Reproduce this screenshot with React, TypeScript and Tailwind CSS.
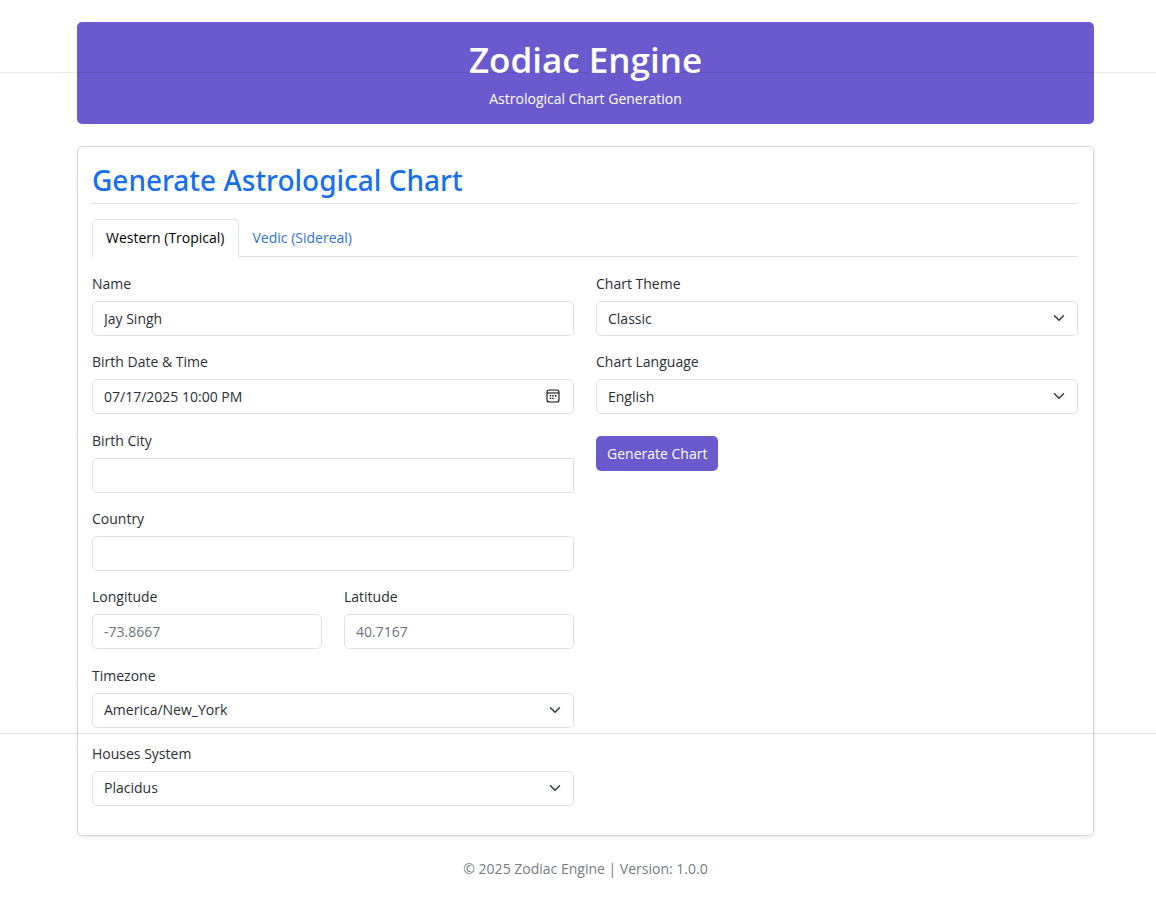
import { useState } from 'react';
import type { ReactNode } from 'react';

const control =
  'block h-[35px] w-full border border-[#dee2e6] bg-white px-[11px] text-[#2b2f33] placeholder:text-[#6c757d] focus:outline-2 focus:outline-[#6a5acd]';

function Field({ id, label, children }: { id: string; label: string; children: ReactNode }) {
  return (
    <div>
      <label htmlFor={id} className="mb-[6px] block leading-[23px]">
        {label}
      </label>
      {children}
    </div>
  );
}

function TextField({
  id,
  label,
  value,
  placeholder,
  squareEnd = false,
}: {
  id: string;
  label: string;
  value?: string;
  placeholder?: string;
  squareEnd?: boolean;
}) {
  return (
    <Field id={id} label={label}>
      <input
        id={id}
        name={id}
        type="text"
        defaultValue={value}
        placeholder={placeholder}
        className={`${control} ${squareEnd ? 'rounded-l-[5px]' : 'rounded-[5px]'}`}
      />
    </Field>
  );
}

function SelectField({ id, label, options }: { id: string; label: string; options: string[] }) {
  return (
    <Field id={id} label={label}>
      <div className="relative">
        <select id={id} name={id} className={`${control} appearance-none rounded-[5px]`}>
          {options.map((option) => (
            <option key={option}>{option}</option>
          ))}
        </select>
        <svg
          viewBox="0 0 16 16"
          aria-hidden="true"
          className="pointer-events-none absolute top-[11px] right-[13px] size-3"
        >
          <path
            d="m2 5 6 6 6-6"
            fill="none"
            stroke="#343a40"
            strokeWidth="2"
            strokeLinecap="round"
            strokeLinejoin="round"
          />
        </svg>
      </div>
    </Field>
  );
}

function DateTimeField() {
  return (
    <Field id="birth-date" label="Birth Date &amp; Time">
      <div className="relative">
        <input
          id="birth-date"
          name="birth-date"
          type="text"
          defaultValue="07/17/2025 10:00 PM"
          className={`${control} rounded-[5px]`}
        />
        <svg
          viewBox="0 0 14 14"
          aria-hidden="true"
          className="pointer-events-none absolute top-[10px] right-[14px] size-[14px]"
        >
          <rect x="1" y="1" width="12" height="12" rx="2" fill="none" stroke="#111" strokeWidth="1.1" />
          <path d="M1 4h12" stroke="#111" strokeWidth="1.1" />
          <g fill="#111">
            <rect x="3.8" y="6" width="1.4" height="1.4" />
            <rect x="6.2" y="6" width="1.4" height="1.4" />
            <rect x="8.8" y="6" width="1.6" height="1.6" />
            <rect x="3.8" y="8.6" width="1.4" height="1.4" />
            <rect x="6.2" y="8.6" width="1.4" height="1.4" />
          </g>
        </svg>
      </div>
    </Field>
  );
}

export default function App() {
  const [tab, setTab] = useState('western');
  const tabs = [
    { id: 'western', label: 'Western (Tropical)' },
    { id: 'vedic', label: 'Vedic (Sidereal)' },
  ];

  return (
    <div className="relative min-h-screen bg-white pt-[22px] pr-[62px] pb-9 pl-[77px] font-['Open_Sans',sans-serif] text-[14px] leading-[22px] text-[#2b2f33]">
      <div className="pointer-events-none absolute inset-x-0 top-[72px] h-px bg-black/8" />
      <div className="pointer-events-none absolute inset-x-0 top-[733px] z-10 h-px bg-black/10" />

      <header className="rounded-[5px] bg-[#6a5acd] pt-[15px] pb-[14px] text-center text-white">
        <h1 className="mb-[6px] text-[35px] leading-[45px] font-semibold">Zodiac Engine</h1>
        <p>Astrological Chart Generation</p>
      </header>

      <main className="mt-[22px] rounded-[5px] border border-[#d3d4d5] pt-[15px] pr-[15px] pb-[29px] pl-[14px] shadow-[0_2px_4px_rgba(0,0,0,0.08)]">
        <h2 className="mb-[15px] border-b border-[#dee2e6] pb-[5px] font-['Noto_Sans','Open_Sans',sans-serif] text-[28px] leading-9 font-medium text-[#166fef]">
          Generate Astrological Chart
        </h2>

        <div role="tablist" className="flex border-b border-[#dee2e6]">
          {tabs.map(({ id, label }) => (
            <button
              key={id}
              type="button"
              role="tab"
              aria-selected={tab === id}
              onClick={() => setTab(id)}
              className={
                tab === id
                  ? '-mb-px h-[38px] rounded-t-[5px] border border-[#dee2e6] border-b-white bg-white px-[13px] text-black'
                  : '-mb-px h-[38px] border border-transparent px-[13px] text-[#2f72dc]'
              }
            >
              {label}
            </button>
          ))}
        </div>

        <form className="mt-[15px] grid grid-cols-2 gap-[22px]" onSubmit={(event) => event.preventDefault()}>
          <div className="flex min-h-[534px] flex-col justify-between">
            <TextField id="name" label="Name" value="Jay Singh" />
            <DateTimeField />
            <TextField id="city" label="Birth City" squareEnd />
            <TextField id="country" label="Country" />
            <div className="grid grid-cols-2 gap-[22px]">
              <TextField id="longitude" label="Longitude" placeholder="-73.8667" />
              <TextField id="latitude" label="Latitude" placeholder="40.7167" />
            </div>
            <SelectField id="timezone" label="Timezone" options={['America/New_York', 'America/Chicago', 'Europe/London']} />
            <SelectField id="houses" label="Houses System" options={['Placidus', 'Koch', 'Whole Sign']} />
          </div>

          <div className="flex flex-col items-stretch gap-[14px]">
            <SelectField id="theme" label="Chart Theme" options={['Classic', 'Dark', 'Light']} />
            <SelectField id="language" label="Chart Language" options={['English', 'Spanish', 'French']} />
            <button
              type="submit"
              className="mt-2 h-[35px] self-start rounded-[5px] bg-[#6a5acd] px-[11px] text-white"
            >
              Generate Chart
            </button>
          </div>
        </form>
      </main>

      <footer className="mt-[22px] text-center text-[#757b81]">© 2025 Zodiac Engine | Version: 1.0.0</footer>
    </div>
  );
}
